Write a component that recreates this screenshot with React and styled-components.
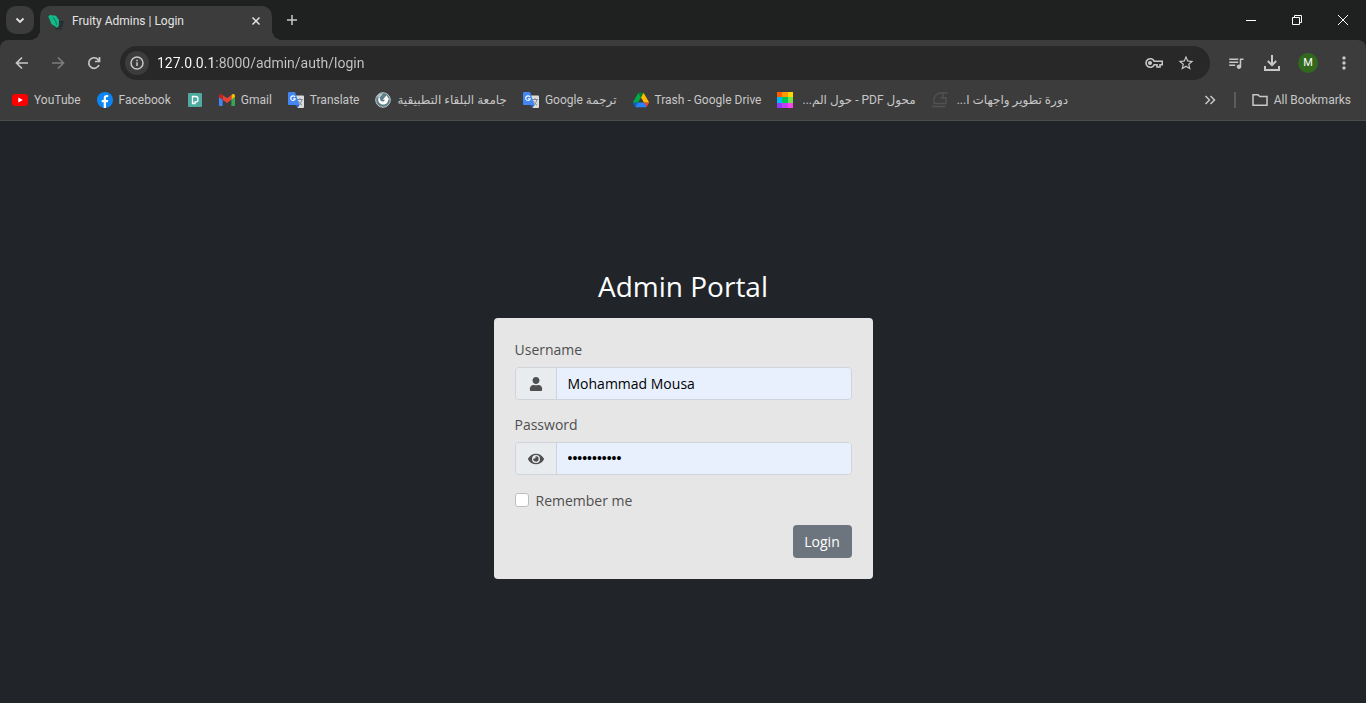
import React from "react";
import styled, { createGlobalStyle, css } from "styled-components";
import { FaEye, FaUser } from "react-icons/fa";
import { MdStarBorder, MdQueueMusic, MdMoreVert } from "react-icons/md";

const color = {
  strip: "#1f2020",
  toolbar: "#3c3c3c",
  field: "#282828",
  icon: "#c7c7c7",
  text: "#c7c7c7",
};

const GlobalStyle = createGlobalStyle`
  *, *::before, *::after { box-sizing: border-box; }
  body { margin: 0; background: #212529; }
  button, input { font: inherit; color: inherit; }
  button { border: 0; padding: 0; background: none; cursor: pointer; }
  svg { display: block; flex: none; }
`;

const Shell = styled.div`
  min-height: 100vh;
  display: flex;
  flex-direction: column;
  font-family: "Open Sans", "DejaVu Sans", sans-serif;
`;

const Chrome = styled.header`
  background: ${color.strip};
  color: ${color.text};
  font-family: Roboto, "DejaVu Sans", sans-serif;
  font-size: 12px;
`;

const TabStrip = styled.div`
  height: 40px;
  display: flex;
  align-items: center;
  padding-left: 6px;
`;

const TabSearch = styled.button`
  width: 28px;
  height: 28px;
  border-radius: 10px;
  background: ${color.toolbar};
  color: #e3e3e3;
  display: grid;
  place-items: center;
`;

const flare = css`
  content: "";
  position: absolute;
  bottom: 0;
  width: 10px;
  height: 10px;
`;

const Tab = styled.div`
  position: relative;
  align-self: flex-end;
  width: 232px;
  height: 34px;
  margin-left: 6px;
  padding: 0 8px;
  display: flex;
  align-items: center;
  gap: 8px;
  border-radius: 10px 10px 0 0;
  background: ${color.toolbar};
  color: #e3e3e3;

  &::before {
    ${flare}
    right: 100%;
    background: radial-gradient(circle at 0 0, transparent 10px, ${color.toolbar} 10px);
  }
  &::after {
    ${flare}
    left: 100%;
    background: radial-gradient(circle at 100% 0, transparent 10px, ${color.toolbar} 10px);
  }
`;

const TabTitle = styled.span`
  flex: 1;
  line-height: 16px;
  padding-bottom: 4px;
  white-space: nowrap;
`;

const TabButton = styled.button`
  width: 16px;
  height: 28px;
  padding-bottom: 4px;
  display: grid;
  place-items: center;
`;

const NewTab = styled.button`
  width: 28px;
  height: 28px;
  margin-left: 6px;
  display: grid;
  place-items: center;
`;

const WindowControls = styled.div`
  display: flex;
  margin-left: auto;
  color: #fff;
`;

const WindowButton = styled.button`
  width: 46px;
  height: 40px;
  display: grid;
  place-items: center;
`;

const Toolbar = styled.div`
  height: 46px;
  display: flex;
  align-items: center;
  gap: 2px;
  padding: 0 5px;
  background: ${color.toolbar};
  border-radius: 8px 8px 0 0;
`;

const ToolButton = styled.button`
  width: 34px;
  height: 34px;
  display: grid;
  place-items: center;
  color: ${(p) => (p.disabled ? "#7c7c7c" : color.icon)};
`;

const AddressBar = styled.div`
  flex: 1;
  min-width: 0;
  height: 34px;
  margin: 0 7px;
  padding: 0 8px 0 5px;
  display: flex;
  align-items: center;
  border-radius: 17px;
  background: ${color.field};
`;

const SiteInfo = styled.button`
  width: 24px;
  height: 24px;
  border-radius: 50%;
  background: ${color.toolbar};
  display: grid;
  place-items: center;
`;

const Address = styled.input`
  flex: 1;
  min-width: 0;
  height: 24px;
  margin-left: 8px;
  padding: 0;
  border: 0;
  outline: 0;
  font-size: 14px;
  color: transparent;
  background: linear-gradient(90deg, #ffffff 58px, ${color.text} 58px);
  background-clip: text;
`;

const FieldButton = styled.button`
  width: 32px;
  height: 28px;
  display: grid;
  place-items: center;
`;

const Avatar = styled.span`
  width: 20px;
  height: 20px;
  border-radius: 50%;
  background: #33691e;
  color: #fff;
  font-size: 11px;
  line-height: 20px;
  text-align: center;
`;

const Bookmarks = styled.nav`
  height: 35px;
  display: flex;
  align-items: center;
  gap: 16px;
  padding: 0 15px 6px 12px;
  background: ${color.toolbar};
  border-bottom: 1px solid #4b4b4b;
`;

const Bookmark = styled.a`
  display: flex;
  align-items: center;
  gap: ${(p) => (p.$elided ? 9 : 6)}px;
  color: inherit;
  text-decoration: none;
  line-height: 16px;
  white-space: nowrap;
`;

const MoreBookmarks = styled.button`
  width: 16px;
  height: 16px;
  margin-left: auto;
  display: grid;
  place-items: center;
`;

const Divider = styled.span`
  width: 2px;
  height: 16px;
  background: #5c5c5c;
`;

const Page = styled.main`
  flex: 1;
  display: flex;
  flex-direction: column;
  align-items: center;
  justify-content: center;
  padding: 24px 16px 0;
  font-size: 14px;
  line-height: 21px;
`;

const Title = styled.h1`
  margin: 0 0 15px;
  color: #fff;
  font-size: 28px;
  line-height: 34px;
  font-weight: 400;
`;

const Card = styled.form`
  width: 100%;
  max-width: 379px;
  padding: 21px;
  display: flex;
  flex-direction: column;
  gap: 14px;
  border-radius: 4px;
  background: #e6e6e6;
  color: #4f4f4f;
`;

const Field = styled.div`
  display: flex;
  flex-direction: column;
  gap: 7px;
`;

const InputGroup = styled.div`
  display: flex;
  height: 33px;
  border: 1px solid #ced4da;
  border-radius: 4px;
  overflow: hidden;
`;

const Addon = styled.span`
  width: 41px;
  display: grid;
  place-items: center;
  border-right: 1px solid #ced4da;
  background: #e9ecef;
`;

const TextInput = styled.input`
  flex: 1;
  min-width: 0;
  padding: 0 11px;
  border: 0;
  outline: 0;
  background: #e8f0fe;
  color: #000;

  &[type="password"] {
    font-family: "Liberation Sans", sans-serif;
  }
`;

const Remember = styled.label`
  display: flex;
  align-items: center;
  gap: 7px;
  padding-top: 1px;
`;

const Checkbox = styled.input`
  appearance: none;
  width: 14px;
  height: 14px;
  margin: 0 0 2px;
  border: 1px solid #bfbfbf;
  border-radius: 3px;
  background: #fff;

  &:checked {
    background: #6c757d;
  }
`;

const LoginButton = styled.button`
  align-self: flex-end;
  min-width: 59px;
  height: 33px;
  padding: 0 11px;
  border-radius: 4px;
  background: #6c757d;
  color: #fff;
`;

function Stroke({ size = 16, width = 2, children }) {
  return (
    <svg width={size} height={size} viewBox={`0 0 ${size} ${size}`} fill="none" stroke="currentColor" strokeWidth={width}>
      {children}
    </svg>
  );
}

const FruityIcon = () => (
  <svg width="16" height="16" viewBox="0 0 16 16">
    <path d="M7 6.500h8l-1.500 5H7zM7.500 13.500h6.500M8.500 15h1M12.500 15h1" fill="#2b3438" stroke="#20282d" strokeWidth="1.200" />
    <path d="M.3 1.500L1.800 0 8 .8l3 4.400-.3 5.800-1.700 1.700L3.500 9z" fill="#10bd8a" />
    <path d="M5 2.500l2.800 3.700.7 4" fill="none" stroke="#22654f" strokeWidth="1" />
  </svg>
);

const YouTubeIcon = () => (
  <svg width="16" height="16" viewBox="0 0 16 16">
    <rect y="2" width="16" height="12" rx="3" fill="#f00" />
    <path d="M6.300 5.400L10.800 8l-4.500 2.600z" fill="#fff" />
  </svg>
);

const FacebookIcon = () => (
  <svg width="16" height="16" viewBox="0 0 16 16">
    <circle cx="8" cy="8" r="8" fill="#0d86f5" />
    <path d="M6.700 15.900v-5.600h-2V8h2V6.400c0-2.200 1.200-3.300 3.100-3.300.7 0 1.400.1 1.400.1v1.900h-.9c-1 0-1.300.5-1.300 1.200V8h2.200l-.4 2.300H9v5.600z" fill="#fff" />
  </svg>
);

const PIcon = () => (
  <svg width="16" height="16" viewBox="0 0 16 16">
    <rect x="1" y="1" width="14" height="14" rx="1" fill="#4fab9f" />
    <path d="M5.500 11.500v-7h3a2.500 2.500 0 0 1 2.500 2.500v.5A2.500 2.500 0 0 1 8.500 10H8v1.500z" fill="none" stroke="#fff" strokeWidth="1.300" />
  </svg>
);

const GmailIcon = () => (
  <svg width="16" height="16" viewBox="52 42 88 66">
    <path fill="#4285f4" d="M58 108h14V74L52 59v43c0 3.320 2.690 6 6 6" />
    <path fill="#34a853" d="M120 108h14c3.320 0 6-2.690 6-6V59l-20 15" />
    <path fill="#fbbc04" d="M120 48v26l20-15v-8c0-7.420-8.470-11.650-14.400-7.200" />
    <path fill="#ea4335" d="M72 74V48l24 18 24-18v26L96 92" />
    <path fill="#c5221f" d="M52 51v8l20 15V48l-5.600-4.200c-5.940-4.450-14.400-.22-14.400 7.200" />
  </svg>
);

const TranslateIcon = () => (
  <svg width="16" height="16" viewBox="0 0 16 16">
    <path d="M6 3.500h9a1 1 0 0 1 1 1V15a1 1 0 0 1-1 1H9.500z" fill="#dcdcdc" />
    <path d="M9 7.500h6M12 6v1.500M10.500 13c2-1 3-3 3.300-5.500M10.500 9c.7 2 2 3.300 3.600 4" fill="none" stroke="#7f8b95" strokeWidth="1" />
    <path d="M1 0h6l4.500 13H1a1 1 0 0 1-1-1V1a1 1 0 0 1 1-1z" fill="#4285f4" />
    <path d="M7 5A2.300 2.300 0 1 0 7.200 6.800H5" fill="none" stroke="#fff" strokeWidth="1.100" />
    <path d="M7.500 13h4l-2 3z" fill="#2f60c4" />
  </svg>
);

const UniversityIcon = () => (
  <svg width="16" height="16" viewBox="0 0 16 16">
    <circle cx="8" cy="8" r="7.300" fill="#5f7f88" stroke="#b9c5c8" />
    <path d="M2 5.500A6.500 6.500 0 0 1 8 1.200l-2 3.300z" fill="#b9c5c8" />
    <path d="M4.500 4.200C2.700 6 2.800 9.500 4.800 11.300c2.300 2 6 1.600 7.500-.8.600-.9.800-1.800.8-2.700h1.200L11.500 3.300 7.800 7.800h2c-.2 1.300-1.200 2-2.500 1.700C5.300 9 4.500 6.800 4.500 4.200z" fill="#fff" />
  </svg>
);

const DriveIcon = () => (
  <svg width="16" height="16" viewBox="0 0 87.300 78">
    <path fill="#0066da" d="m6.600 66.850 3.850 6.650c.8 1.400 1.950 2.500 3.300 3.300l13.750-23.800h-27.500c0 1.550.4 3.100 1.200 4.500z" />
    <path fill="#00ac47" d="m43.650 25-13.750-23.800c-1.350.8-2.500 1.900-3.300 3.300l-25.400 44a9.060 9.060 0 0 0 -1.200 4.500h27.500z" />
    <path fill="#ea4335" d="m73.550 76.800c1.350-.8 2.500-1.900 3.300-3.300l1.600-2.750 7.650-13.250c.8-1.400 1.200-2.950 1.200-4.500h-27.502l5.852 11.500z" />
    <path fill="#00832d" d="m43.650 25 13.750-23.800c-1.350-.8-2.900-1.200-4.500-1.200h-18.500c-1.600 0-3.150.45-4.500 1.200z" />
    <path fill="#2684fc" d="m59.800 53h-32.300l-13.750 23.800c1.350.8 2.900 1.200 4.500 1.200h50.800c1.600 0 3.150-.45 4.500-1.200z" />
    <path fill="#ffba00" d="m73.400 26.500-12.700-22c-.8-1.400-1.950-2.500-3.300-3.300l-13.750 23.800 16.150 28h27.450c0-1.550-.4-3.100-1.200-4.500z" />
  </svg>
);

const mosaic = ["#ff5c00", "#ff9800", "#ffd600", "#00b8ff", "#00c853", "#76e04a", "#8c3cff", "#c43cff", "#ff40f0"];
const MosaicIcon = () => (
  <svg width="16" height="16" viewBox="0 0 16 16" shapeRendering="crispEdges">
    {mosaic.map((fill, i) => (
      <rect key={fill} x={[0, 5, 11][i % 3]} y={[0, 5, 11][Math.floor(i / 3)]} width="6" height="6" fill={fill} />
    ))}
  </svg>
);

const CourseIcon = () => (
  <svg width="16" height="16" viewBox="0 0 16 16" fill="none" stroke="#525252" strokeWidth="1.300">
    <path d="M15.500 1H9C5 1 2 4 2 7.500V11.500h12V6H8.500M11 1v5M0 14.500h13.500" />
  </svg>
);

const bookmarks = [
  { label: "YouTube", Icon: YouTubeIcon },
  { label: "Facebook", Icon: FacebookIcon },
  { label: "", name: "P", Icon: PIcon },
  { label: "Gmail", Icon: GmailIcon },
  { label: "Translate", Icon: TranslateIcon },
  { label: "جامعة البلقاء التطبيقية", Icon: UniversityIcon, dir: "rtl" },
  { label: "ترجمة Google", Icon: TranslateIcon, dir: "rtl" },
  { label: "Trash - Google Drive", Icon: DriveIcon },
  { label: "محول PDF - حول الم...", Icon: MosaicIcon, dir: "rtl", elided: true },
  { label: "دورة تطوير واجهات ا...", Icon: CourseIcon, dir: "rtl", elided: true },
];

function BrowserChrome() {
  return (
    <Chrome>
      <TabStrip>
        <TabSearch aria-label="Search tabs">
          <Stroke width={1.8}><path d="M4.500 6.500L8 10l3.500-3.500" /></Stroke>
        </TabSearch>
        <Tab>
          <FruityIcon />
          <TabTitle>Fruity Admins | Login</TabTitle>
          <TabButton aria-label="Close tab">
            <Stroke width={1.5}><path d="M4.500 4.500l7 7M11.500 4.500l-7 7" /></Stroke>
          </TabButton>
        </Tab>
        <NewTab aria-label="New tab">
          <Stroke width={1.5}><path d="M8 3v10M3 8h10" /></Stroke>
        </NewTab>
        <WindowControls>
          <WindowButton aria-label="Minimize">
            <Stroke size={10} width={1}><path d="M0 5.500h10" /></Stroke>
          </WindowButton>
          <WindowButton aria-label="Restore">
            <Stroke size={10} width={1}><path d="M.5 2.500h7v7h-7zM2.500 2.500v-2h7v7h-2" /></Stroke>
          </WindowButton>
          <WindowButton aria-label="Close">
            <Stroke size={10} width={1}><path d="M0 0l10 10M10 0L0 10" /></Stroke>
          </WindowButton>
        </WindowControls>
      </TabStrip>
      <Toolbar>
        <ToolButton aria-label="Back">
          <Stroke width={1.7}><path d="M14 8H3M8 2.500L2.500 8 8 13.500" /></Stroke>
        </ToolButton>
        <ToolButton aria-label="Forward" disabled>
          <Stroke width={1.7}><path d="M2 8h11M8 2.500L13.500 8 8 13.500" /></Stroke>
        </ToolButton>
        <ToolButton aria-label="Reload">
          <Stroke width={1.7}><path d="M13 10a5.300 5.300 0 1 1-.8-5.300L13.300 6M13.500 2v4.500H9" /></Stroke>
        </ToolButton>
        <AddressBar>
          <SiteInfo aria-label="View site information">
            <Stroke width={1.5}><circle cx="8" cy="8" r="6" /><path d="M8 7.300V11M8 4.800v1.500" /></Stroke>
          </SiteInfo>
          <Address aria-label="Address" defaultValue="127.0.0.1:8000/admin/auth/login" spellCheck={false} />
          <FieldButton aria-label="Manage passwords">
            <Stroke size={18} width={1.6}>
              <path d="M9.200 7.200A4.300 4.300 0 1 0 9.200 10.800H12V13h3v-2.200h2.300V7.200z" />
              <circle cx="5" cy="9" r="1.300" fill="currentColor" />
            </Stroke>
          </FieldButton>
          <FieldButton aria-label="Bookmark this tab"><MdStarBorder size={18} /></FieldButton>
        </AddressBar>
        <ToolButton aria-label="Media controls"><MdQueueMusic size={18} /></ToolButton>
        <ToolButton aria-label="Downloads">
          <Stroke><path d="M8 0v10M3.800 6L8 10.200 12.200 6M1 11v4h14v-4" /></Stroke>
        </ToolButton>
        <ToolButton aria-label="Profile"><Avatar>M</Avatar></ToolButton>
        <ToolButton aria-label="Menu"><MdMoreVert size={20} /></ToolButton>
      </Toolbar>
      <Bookmarks>
        {bookmarks.map(({ label, name, Icon, dir, elided }) => (
          <Bookmark key={label} href="#" aria-label={name} $elided={elided}>
            <Icon />
            {label && <span dir={dir}>{label}</span>}
          </Bookmark>
        ))}
        <MoreBookmarks aria-label="More bookmarks">
          <Stroke width={1.5}><path d="M3.500 4L7.500 8l-4 4M8.500 4l4 4-4 4" /></Stroke>
        </MoreBookmarks>
        <Divider />
        <Bookmark href="#">
          <Stroke width={1.5}><path d="M1 2.800h5l1.800 1.800H15v8.700H1z" /></Stroke>
          <span>All Bookmarks</span>
        </Bookmark>
      </Bookmarks>
    </Chrome>
  );
}

export default function App() {
  return (
    <Shell>
      <GlobalStyle />
      <BrowserChrome />
      <Page>
        <Title>Admin Portal</Title>
        <Card onSubmit={(e) => e.preventDefault()}>
          <Field>
            <label htmlFor="username">Username</label>
            <InputGroup>
              <Addon><FaUser size={14} /></Addon>
              <TextInput id="username" type="text" defaultValue="Mohammad Mousa" />
            </InputGroup>
          </Field>
          <Field>
            <label htmlFor="password">Password</label>
            <InputGroup>
              <Addon><FaEye size={16} /></Addon>
              <TextInput id="password" type="password" defaultValue="12345678901" />
            </InputGroup>
          </Field>
          <Remember>
            <Checkbox type="checkbox" />
            Remember me
          </Remember>
          <LoginButton type="submit">Login</LoginButton>
        </Card>
      </Page>
    </Shell>
  );
}
